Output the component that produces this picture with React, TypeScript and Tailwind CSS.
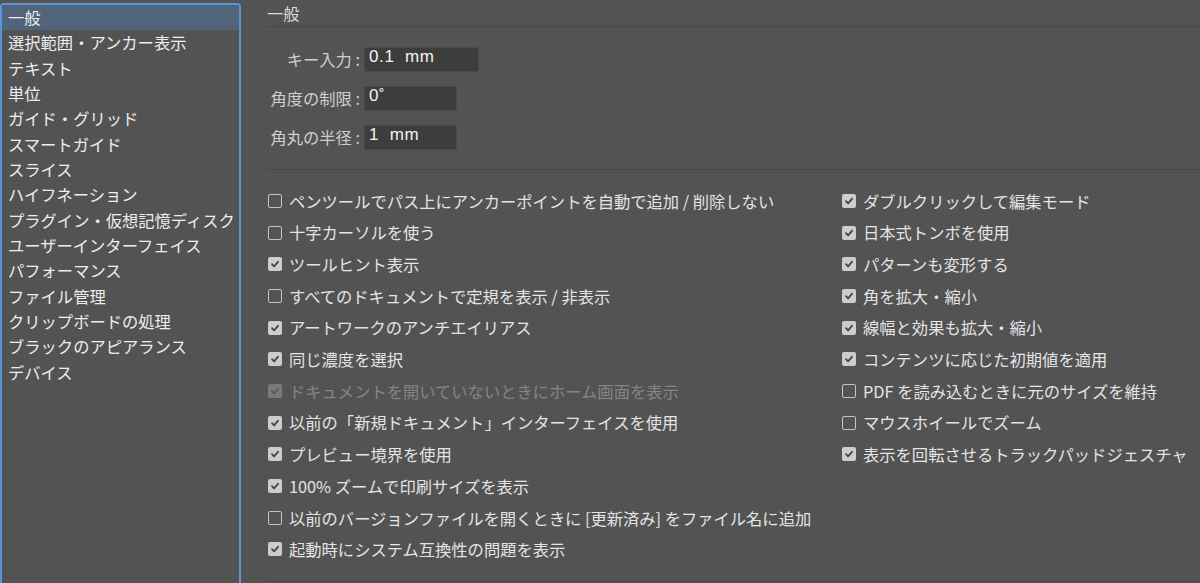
import React from 'react';

const sidebarItems = [
  '一般',
  '選択範囲・アンカー表示',
  'テキスト',
  '単位',
  'ガイド・グリッド',
  'スマートガイド',
  'スライス',
  'ハイフネーション',
  'プラグイン・仮想記憶ディスク',
  'ユーザーインターフェイス',
  'パフォーマンス',
  'ファイル管理',
  'クリップボードの処理',
  'ブラックのアピアランス',
  'デバイス',
];

type Opt = { label: string; checked: boolean; disabled?: boolean };

const leftOptions: Opt[] = [
  { label: 'ペンツールでパス上にアンカーポイントを自動で追加 / 削除しない', checked: false },
  { label: '十字カーソルを使う', checked: false },
  { label: 'ツールヒント表示', checked: true },
  { label: 'すべてのドキュメントで定規を表示 / 非表示', checked: false },
  { label: 'アートワークのアンチエイリアス', checked: true },
  { label: '同じ濃度を選択', checked: true },
  { label: 'ドキュメントを開いていないときにホーム画面を表示', checked: true, disabled: true },
  { label: '以前の「新規ドキュメント」インターフェイスを使用', checked: true },
  { label: 'プレビュー境界を使用', checked: true },
  { label: '100% ズームで印刷サイズを表示', checked: true },
  { label: '以前のバージョンファイルを開くときに [更新済み] をファイル名に追加', checked: false },
  { label: '起動時にシステム互換性の問題を表示', checked: true },
];

const rightOptions: Opt[] = [
  { label: 'ダブルクリックして編集モード', checked: true },
  { label: '日本式トンボを使用', checked: true },
  { label: 'パターンも変形する', checked: true },
  { label: '角を拡大・縮小', checked: true },
  { label: '線幅と効果も拡大・縮小', checked: true },
  { label: 'コンテンツに応じた初期値を適用', checked: true },
  { label: 'PDF を読み込むときに元のサイズを維持', checked: false },
  { label: 'マウスホイールでズーム', checked: false },
  { label: '表示を回転させるトラックパッドジェスチャ', checked: true },
];

const Checkbox: React.FC<{ checked: boolean; disabled?: boolean }> = ({ checked, disabled }) => {
  if (!checked) {
    return <span className="block w-[14px] h-[14px] rounded-[2px] border-[1.5px] border-[#c4c4c4] shrink-0" />;
  }
  return (
    <span
      className={`flex items-center justify-center w-[14px] h-[14px] rounded-[2px] shrink-0 ${
        disabled ? 'bg-[#7a7a7a]' : 'bg-[#cdcdcd]'
      }`}
    >
      <svg width="10" height="10" viewBox="0 0 10 10">
        <path
          d="M2 5.2 L4.1 7.3 L8 2.8"
          fill="none"
          stroke={disabled ? '#5a5a5a' : '#454545'}
          strokeWidth="1.8"
          strokeLinecap="round"
          strokeLinejoin="round"
        />
      </svg>
    </span>
  );
};

const OptionRow: React.FC<{ opt: Opt }> = ({ opt }) => (
  <div className="flex items-center gap-[7px] h-[31.7px]">
    <Checkbox checked={opt.checked} disabled={opt.disabled} />
    <span className={`whitespace-nowrap ${opt.disabled ? 'text-[#858585]' : 'text-[#e4e4e4]'}`}>{opt.label}</span>
  </div>
);

const FieldRow: React.FC<{ label: string; value: string; width: string }> = ({ label, value, width }) => (
  <div className="flex items-center h-[25px]">
    <div className="w-[97px] text-right text-[#cfcfcf] pr-[4px] whitespace-nowrap">{label} :</div>
    <div
      className={`${width} h-[25px] bg-[#3d3d3d] border border-[#4a4a4a] rounded-[2px] px-[4px] text-[#f2f2f2] text-[17px] leading-[17px] tracking-[0.6px] whitespace-pre`}
      style={{ fontFamily: '"Liberation Sans", Arial, sans-serif' }}
    >
      {value}
    </div>
  </div>
);

export default function App() {
  return (
    <div
      className="w-[1200px] h-[583px] overflow-hidden bg-[#535353] flex text-[16.3px]"
      style={{ fontFamily: '"Noto Sans CJK JP", "Noto Sans", sans-serif' }}
    >
      <div className="w-[241px] h-[620px] mt-[3px] border-2 border-[#5b93d8] rounded-t-[4px] shrink-0 text-[#ededed]">
        {sidebarItems.map((item, i) => (
          <div
            key={item}
            className={`h-[25.35px] leading-[25px] pl-[6px] whitespace-nowrap ${i === 0 ? 'bg-[#52647a]' : ''}`}
          >
            {item}
          </div>
        ))}
      </div>

      <div className="flex-1 flex flex-col pl-[26px] h-[583px]">
        <div className="h-[27px] pt-[2px] leading-[22px] text-[#dcdcdc] border-b border-[#484848]">一般</div>

        <div className="flex flex-col gap-[14px] mt-[20px]">
          <FieldRow label="キー入力" value="0.1  mm" width="w-[115px]" />
          <FieldRow label="角度の制限" value="0˚" width="w-[93px]" />
          <FieldRow label="角丸の半径" value="1  mm" width="w-[93px]" />
        </div>

        <div className="mt-[19px] border-b border-[#484848]" />

        <div className="flex mt-[15px] pl-[1px]">
          <div className="w-[574px] flex flex-col">
            {leftOptions.map((o) => (
              <OptionRow key={o.label} opt={o} />
            ))}
          </div>
          <div className="flex flex-col">
            {rightOptions.map((o) => (
              <OptionRow key={o.label} opt={o} />
            ))}
          </div>
        </div>

        <div className="mt-auto mb-[1px] border-b border-[#4a4a4a]" />
      </div>
    </div>
  );
}
